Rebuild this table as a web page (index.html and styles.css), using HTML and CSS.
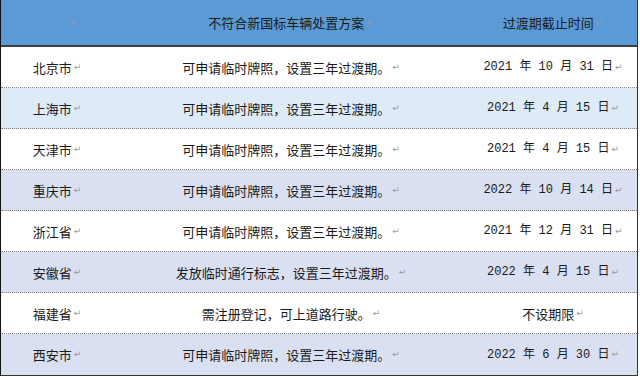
FILE: index.html
```html
<!DOCTYPE html>
<html lang="zh">
<head>
<meta charset="utf-8">
<link rel="stylesheet" href="styles.css">
</head>
<body>
<div class="table">
  <div class="row head">
    <div class="cell c1"><span class="pm">↵</span></div>
    <div class="cell c2">不符合新国标车辆处置方案<span class="pm">↵</span></div>
    <div class="cell c3">过渡期截止时间<span class="pm">↵</span></div>
  </div>
  <div class="row white">
    <div class="cell c1">北京市<span class="pm">↵</span></div>
    <div class="cell c2">可申请临时牌照，设置三年过渡期。<span class="pm">↵</span></div>
    <div class="cell c3 date">2021 年 10 月 31 日<span class="pm">↵</span></div>
  </div>
  <div class="row blue">
    <div class="cell c1">上海市<span class="pm">↵</span></div>
    <div class="cell c2">可申请临时牌照，设置三年过渡期。<span class="pm">↵</span></div>
    <div class="cell c3 date">2021 年 4 月 15 日<span class="pm">↵</span></div>
  </div>
  <div class="row white">
    <div class="cell c1">天津市<span class="pm">↵</span></div>
    <div class="cell c2">可申请临时牌照，设置三年过渡期。<span class="pm">↵</span></div>
    <div class="cell c3 date">2021 年 4 月 15 日<span class="pm">↵</span></div>
  </div>
  <div class="row lav">
    <div class="cell c1">重庆市<span class="pm">↵</span></div>
    <div class="cell c2">可申请临时牌照，设置三年过渡期。<span class="pm">↵</span></div>
    <div class="cell c3 date">2022 年 10 月 14 日<span class="pm">↵</span></div>
  </div>
  <div class="row white">
    <div class="cell c1">浙江省<span class="pm">↵</span></div>
    <div class="cell c2">可申请临时牌照，设置三年过渡期。<span class="pm">↵</span></div>
    <div class="cell c3 date">2021 年 12 月 31 日<span class="pm">↵</span></div>
  </div>
  <div class="row lav">
    <div class="cell c1">安徽省<span class="pm">↵</span></div>
    <div class="cell c2">发放临时通行标志，设置三年过渡期。<span class="pm">↵</span></div>
    <div class="cell c3 date">2022 年 4 月 15 日<span class="pm">↵</span></div>
  </div>
  <div class="row white">
    <div class="cell c1">福建省<span class="pm">↵</span></div>
    <div class="cell c2">需注册登记，可上道路行驶。<span class="pm">↵</span></div>
    <div class="cell c3">不设期限<span class="pm">↵</span></div>
  </div>
  <div class="row lav last">
    <div class="cell c1">西安市<span class="pm">↵</span></div>
    <div class="cell c2">可申请临时牌照，设置三年过渡期。<span class="pm">↵</span></div>
    <div class="cell c3 date">2022 年 6 月 30 日<span class="pm">↵</span></div>
  </div>
</div>
</body>
</html>
```
FILE: styles.css
```css
html, body {
  margin: 0;
  padding: 0;
  background: #ffffff;
}
body {
  font-family: "Noto Sans CJK SC", "Noto Sans", sans-serif;
  font-size: 13px;
  color: #1a1a1a;
}
.table {
  width: 636px;
  border-left: 1px solid #111;
  border-right: 1px solid #333;
  border-bottom: 1px solid #333;
  display: flex;
  flex-direction: column;
}
.row {
  display: grid;
  grid-template-columns: 112px 356px 1fr;
  height: 40px;
  border-bottom: 1px dotted #808080;
}
.row.last {
  border-bottom: none;
  height: 41px;
}
.row.head {
  height: 45px;
  background: #5b9bd5;
  border-bottom: 2px solid #3f3f3f;
}
.row.white { background: #ffffff; }
.row.blue { background: #deeaf6; }
.row.lav { background: #d9e0f2; }
.cell {
  display: flex;
  align-items: center;
  justify-content: center;
  white-space: nowrap;
  line-height: 1;
}
.head .c1 {
  padding-left: 32px;
}
.date {
  font-family: "Liberation Mono", "Noto Sans CJK SC", monospace;
  font-size: 12px;
  letter-spacing: 0;
}
.pm {
  color: #9a9a9a;
  font-family: "DejaVu Sans", sans-serif;
  font-size: 9px;
  margin-left: 2px;
}
```
